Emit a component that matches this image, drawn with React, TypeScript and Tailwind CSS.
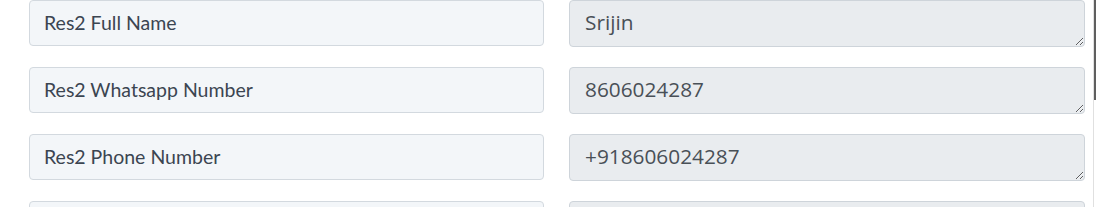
import React from "react";

const rows = [
  { label: "Res2 Full Name", value: "Srijin" },
  { label: "Res2 Whatsapp Number", value: "8606024287" },
  { label: "Res2 Phone Number", value: "+918606024287" },
  { label: "", value: "" },
];

export default function App() {
  return (
    <div className="flex h-[207px] w-[1096px] overflow-hidden bg-white">
      <div className="flex flex-1 flex-col gap-[20px] pl-[29px]">
        {rows.map((r, i) => (
          <div key={i} className="flex shrink-0 gap-[25px]">
            <div
              className="flex h-[46px] w-[515px] items-center rounded-[4px] border border-[#d3d9df] bg-[#f3f6f9] px-[14px] text-[19.5px] text-[#3b4551]"
              style={{ fontFamily: "Lato, 'Open Sans', sans-serif" }}
            >
              {r.label}
            </div>
            <textarea
              readOnly
              value={r.value}
              rows={1}
              className="h-[47px] w-[516px] rounded-[4px] border border-[#ced4da] bg-[#e9ecef] px-[15px] pt-[7px] text-[20.8px] leading-[29px] text-[#495057] outline-none"
              style={{ fontFamily: "'Open Sans', sans-serif" }}
            />
          </div>
        ))}
      </div>
      <div className="ml-[8px] flex w-[3px] flex-col border-l border-[#e0e0e0]">
        <div className="h-[100px] w-[2px] bg-[#5f5f5f]" />
      </div>
    </div>
  );
}
